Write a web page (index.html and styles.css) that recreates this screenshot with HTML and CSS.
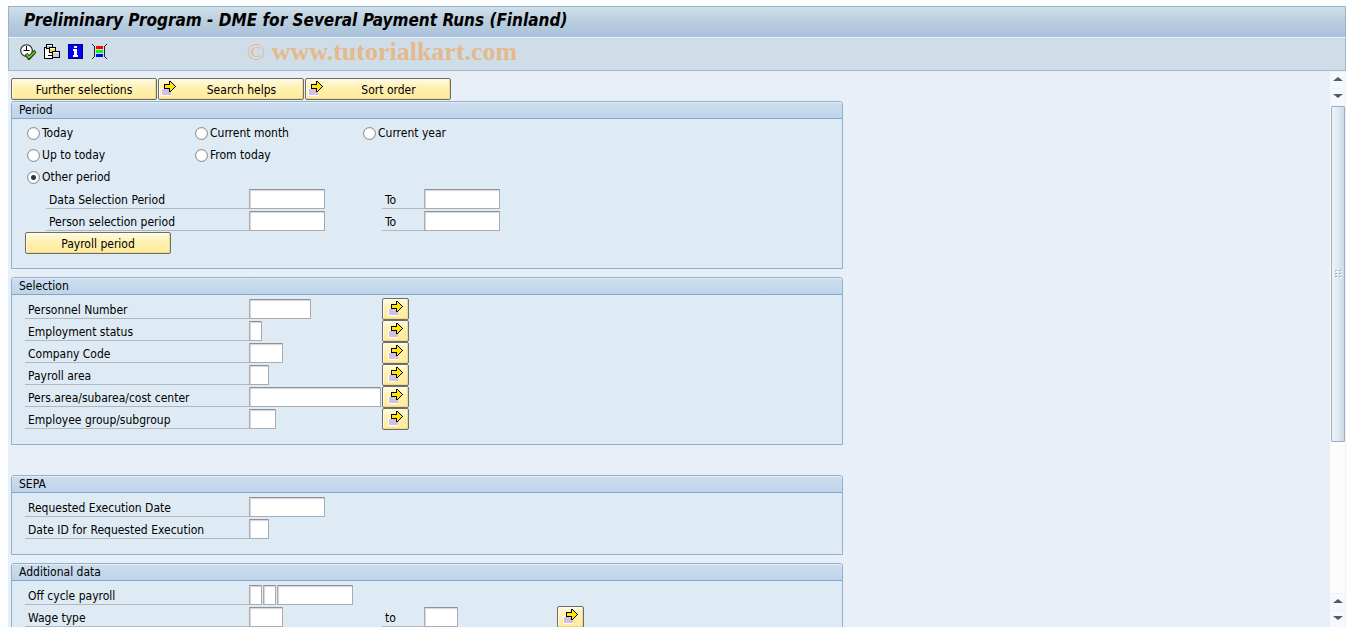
FILE: index.html
```html
<!DOCTYPE html>
<html lang="en">
<head>
	<meta charset="UTF-8">
	<meta name="viewport" content="width=device-width, initial-scale=1.0">
	<title>Preliminary Program - DME for Several Payment Runs (Finland)</title>
	<link rel="stylesheet" href="styles.css">
</head>
<body>
	<svg class="defs" aria-hidden="true">
		<symbol id="arrow" viewBox="0 0 15 15">
			<rect x="0" y="7" width="10" height="8" fill="#fff"/>
			<rect x="1" y="8" width="9" height="6" fill="#d3bfdf"/>
			<path d="M3 3h5V0h2v1h1v1h1v1h1v1h1v1h1v1h-1v1h-1v1h-1v1h-1v1h-1v1H8V8H3z" fill="#000"/>
			<path d="M4 4h5V1h1v1h1v1h1v1h1v1h1v1h-1v1h-1v1h-1v1h-1v1H9V7H4z" fill="#ffe600"/>
		</symbol>
	</svg>
	<div class="app">
		<header class="titlebar"><h1>Preliminary Program - DME for Several Payment Runs (Finland)</h1></header>
		<div class="toolbar">
			<button type="button" class="tool" aria-label="Execute">
				<svg width="16" height="16" viewBox="0 0 16 16">
					<circle cx="6.500" cy="6.500" r="5.800" fill="#fff" stroke="#222" stroke-width="1.100"/>
					<path d="M6.500 2v5M3.500 6.500h6" stroke="#000" stroke-width="1" fill="none"/>
					<path d="M6 10l3 4 6.500-7" fill="none" stroke="#143c08" stroke-width="3.600"/>
					<path d="M6.500 10.500L9 13.500l6-6" fill="none" stroke="#7acb35" stroke-width="1.600"/>
				</svg>
			</button>
			<button type="button" class="tool" aria-label="Get variant">
				<svg width="16" height="16" viewBox="0 0 16 16" shape-rendering="crispEdges">
					<path d="M0 3h9v12H0z" fill="#000"/>
					<path d="M1 4h7v10H1z" fill="#fff"/>
					<path d="M2 0h7v5H2z" fill="#000"/>
					<path d="M3 1h5v3H3z" fill="#bcc3d8"/>
					<path d="M5 3h7v6H5z" fill="#000"/>
					<path d="M6 4h5v4H6z" fill="#f5e73b"/>
					<path d="M3 6h1v6h5v-1H4V6z" fill="#000"/>
					<path d="M8 7h8v7H8z" fill="#000"/>
					<path d="M9 8h6v5H9z" fill="#c8cfdd"/>
					<path d="M9 8h6v1H9zM3 1h5v1H3zM6 4h5v1H6z" fill="#fff"/>
				</svg>
			</button>
			<button type="button" class="tool" aria-label="Information">
				<svg width="16" height="16" viewBox="0 0 16 16" shape-rendering="crispEdges">
					<path d="M0 0h15v15H0z" fill="#000080"/>
					<path d="M1 1h13v13H1z" fill="#0000f5"/>
					<path d="M6 2h3v2H6zM5 5h4v6h1v2H5v-2h1V7H5z" fill="#fff"/>
				</svg>
			</button>
			<button type="button" class="tool" aria-label="Dynamic selections">
				<svg width="16" height="16" viewBox="0 0 16 16" shape-rendering="crispEdges">
					<path d="M0 0h1v1H0zM1 1h1v1H1zM2 2h1v11H2zM1 13h1v1H1zM0 14h1v1H0zM14 0h1v1h-1zM13 1h1v1h-1zM12 2h1v11h-1zM13 13h1v1h-1zM14 14h1v1h-1z" fill="#222"/>
					<path d="M4 2h7v3H4z" fill="#f00"/>
					<path d="M4 6h7v3H4z" fill="#0f0"/>
					<path d="M4 10h7v3H4z" fill="#00f"/>
				</svg>
			</button>
			<p class="mark"><span>©</span> www.tutorialkart.com</p>
		</div>
		<div class="work">
			<main class="screen">
				<div class="actions">
					<button type="button" class="btn">Further selections</button>
					<button type="button" class="btn"><svg class="arrow"><use href="#arrow"/></svg><span>Search helps</span></button>
					<button type="button" class="btn"><svg class="arrow"><use href="#arrow"/></svg><span>Sort order</span></button>
				</div>

				<section class="panel">
					<h2>Period</h2>
					<div class="fields">
						<div class="radios">
							<label><input type="radio" name="period">Today</label>
							<label><input type="radio" name="period">Current month</label>
							<label><input type="radio" name="period">Current year</label>
						</div>
						<div class="radios">
							<label><input type="radio" name="period">Up to today</label>
							<label><input type="radio" name="period">From today</label>
						</div>
						<div class="radios">
							<label><input type="radio" name="period" checked>Other period</label>
						</div>
						<div class="row indent">
							<label for="data-from">Data Selection Period</label>
							<div><input type="text" id="data-from" class="w-date"></div>
							<label for="data-to">To</label>
							<div><input type="text" id="data-to" class="w-date"></div>
						</div>
						<div class="row indent">
							<label for="person-from">Person selection period</label>
							<div><input type="text" id="person-from" class="w-date"></div>
							<label for="person-to">To</label>
							<div><input type="text" id="person-to" class="w-date"></div>
						</div>
						<button type="button" class="btn">Payroll period</button>
					</div>
				</section>

				<section class="panel">
					<h2>Selection</h2>
					<div class="fields">
						<div class="row">
							<label for="pernr">Personnel Number</label>
							<div><input type="text" id="pernr" class="w-num"></div>
							<button type="button" class="multi" aria-label="Multiple selection"><svg class="arrow"><use href="#arrow"/></svg></button>
						</div>
						<div class="row">
							<label for="status">Employment status</label>
							<div><input type="text" id="status" class="w-1"></div>
							<button type="button" class="multi" aria-label="Multiple selection"><svg class="arrow"><use href="#arrow"/></svg></button>
						</div>
						<div class="row">
							<label for="company">Company Code</label>
							<div><input type="text" id="company" class="w-4"></div>
							<button type="button" class="multi" aria-label="Multiple selection"><svg class="arrow"><use href="#arrow"/></svg></button>
						</div>
						<div class="row">
							<label for="area">Payroll area</label>
							<div><input type="text" id="area" class="w-2"></div>
							<button type="button" class="multi" aria-label="Multiple selection"><svg class="arrow"><use href="#arrow"/></svg></button>
						</div>
						<div class="row">
							<label for="cost">Pers.area/subarea/cost center</label>
							<div><input type="text" id="cost" class="w-long"></div>
							<button type="button" class="multi" aria-label="Multiple selection"><svg class="arrow"><use href="#arrow"/></svg></button>
						</div>
						<div class="row">
							<label for="group">Employee group/subgroup</label>
							<div><input type="text" id="group" class="w-3"></div>
							<button type="button" class="multi" aria-label="Multiple selection"><svg class="arrow"><use href="#arrow"/></svg></button>
						</div>
					</div>
				</section>

				<section class="panel spaced">
					<h2>SEPA</h2>
					<div class="fields">
						<div class="row">
							<label for="exec-date">Requested Execution Date</label>
							<div><input type="text" id="exec-date" class="w-date"></div>
						</div>
						<div class="row">
							<label for="date-id">Date ID for Requested Execution</label>
							<div><input type="text" id="date-id" class="w-2"></div>
						</div>
					</div>
				</section>

				<section class="panel">
					<h2>Additional data</h2>
					<div class="fields">
						<div class="row">
							<label for="off-cycle">Off cycle payroll</label>
							<div>
								<input type="text" id="off-cycle" class="w-1">
								<input type="text" class="w-1" aria-label="Payroll identifier">
								<input type="text" class="w-date" aria-label="Off cycle date">
							</div>
						</div>
						<div class="row">
							<label for="wage-from">Wage type</label>
							<div><input type="text" id="wage-from" class="w-4"></div>
							<label for="wage-to">to</label>
							<div><input type="text" id="wage-to" class="w-4"></div>
							<button type="button" class="multi" aria-label="Multiple selection"><svg class="arrow"><use href="#arrow"/></svg></button>
						</div>
					</div>
				</section>
			</main>
			<div class="scroll">
				<button type="button" class="up" aria-label="Scroll up"></button>
				<button type="button" class="down" aria-label="Scroll down"></button>
				<div class="track">
					<div class="thumb"><i></i><i></i><i></i><i></i><i></i><i></i></div>
				</div>
				<button type="button" class="up" aria-label="Line up"></button>
				<button type="button" class="down" aria-label="Line down"></button>
			</div>
		</div>
	</div>
</body>
</html>
```
FILE: styles.css
```css
*{ box-sizing: border-box; }
body,h1,h2,p{ margin: 0; padding: 0; }
body,button,input{
	font-family: Tahoma, "DejaVu Sans Condensed", "DejaVu Sans", sans-serif;
	font-size: 12px;
	color: #000;
}
body{ background: #fcfdfe; }
button{ padding: 0; }
.defs{ display: none; }
.app{
	display: flex; flex-direction: column;
	height: 100vh;
	padding: 6px 0 3px 8px;
}

/* title and toolbar */
.titlebar{
	height: 31px;
	padding-left: 15px;
	border: 1px solid #9cb3c6; border-bottom: 0;
	background: linear-gradient(#d0e0eb, #b9cddd 50%, #a9c1dc);
}
.titlebar h1{
	font-size: 17px;
	font-style: italic;
	line-height: 27px;
	white-space: nowrap;
}
.toolbar{
	display: flex; align-items: center;
	gap: 8px;
	height: 34px;
	padding: 0 0 4px 11px;
	border: 1px solid #a3b8ca; border-top-color: #eaf2f8;
	background: #cfdde8;
}
.tool{
	width: 16px; height: 16px;
	border: 0;
	background: none;
}
.tool svg{ display: block; }
.mark{
	margin-left: 131px;
	font: bold 26px/28px "Liberation Serif", serif;
	color: #e4b98b;
	white-space: nowrap;
}
.mark span{ font-size: 24px; font-weight: normal; }

/* selection screen */
.work{
	flex: 1;
	display: flex;
	min-height: 0;
	background: #e8eff7;
}
.screen{
	flex: 1;
	min-width: 0;
	padding: 7px 3px 0;
	overflow: hidden;
}
.actions{
	display: flex;
	gap: 1px;
	margin-bottom: 1px;
}
.btn,.multi{
	display: flex; align-items: center; justify-content: center;
	height: 22px;
	border: 1px solid #6d6c69; border-radius: 2px;
	background: linear-gradient(#fffbe6, #fff1b4 40%, #feea98);
	box-shadow: inset 1px 1px #fffbe0, inset -1px -1px #f0d98a;
}
.btn{
	width: 146px;
	padding-top: 2px;
}
.multi{
	width: 27px;
	padding: 2px 0 0 5px;
	justify-content: flex-start;
}
.arrow{
	display: block;
	width: 15px; height: 15px;
	flex: none;
	align-self: flex-start;
	shape-rendering: crispEdges;
}
.btn .arrow{ margin-left: 2px; }
.btn .arrow + span{ flex: 1; padding-left: 4px; }
.panel{
	max-width: 832px;
	margin-bottom: 8px;
	border: 1px solid #8fb0ce; border-radius: 3px 3px 0 0;
	background: #deebf4;
}
.panel.spaced{ margin-top: 30px; }
.panel h2{
	height: 17px;
	padding-left: 7px;
	border-top: 1px solid #e4edf6; border-bottom: 1px solid #85a5c8;
	border-radius: 2px 2px 0 0;
	background: linear-gradient(#cdddee, #bdd4ea);
	font-size: 12px; font-weight: normal;
	line-height: 15px;
}
.fields{ padding: 3px 13px 14px; }
.radios{
	display: flex; align-items: center;
	height: 22px;
}
.radios label{
	display: flex; align-items: center;
	gap: 2px;
	width: 168px;
	line-height: 16px;
}
.radios input{
	appearance: none;
	width: 13px; height: 13px;
	margin: 0 0 0 2px;
	border: 1px solid #8b8d92; border-radius: 50%;
	background: #fff;
	box-shadow: inset 0 0 1px #aaa;
}
.radios input:checked{
	background: radial-gradient(circle, #33334a 2px, #fff 3px);
}
.row{
	display: grid;
	grid-template-columns: 224px 133px 42px 133px 27px;
	height: 22px;
}
.row.indent{
	grid-template-columns: 203px 133px 42px 133px 27px;
	padding-left: 21px;
}
.row label{
	height: 21px;
	padding: 1px 0 0 3px;
	border-bottom: 1px solid #b4b7ba;
	line-height: 22px;
	white-space: nowrap;
}
.row div{
	display: flex;
	gap: 1px;
	padding-top: 1px;
}
.row input{
	flex: none;
	height: 20px;
	padding: 0 2px;
	border: 1px solid #a9abb0; border-top-color: #8f9196; border-radius: 1px;
	background: #fff;
	box-shadow: inset 1px 1px 1px #d5d5dc;
}
.row .w-1{ width: 13px; }
.row .w-2{ width: 20px; }
.row .w-3{ width: 27px; }
.row .w-4{ width: 34px; }
.row .w-num{ width: 62px; }
.row .w-date{ width: 76px; }
.row .w-long{ width: 132px; }

/* scroll bar */
.scroll{
	display: flex; flex-direction: column;
	gap: 1px;
	width: 16px;
	padding: 1px 1px 0 0;
	background: #eef2f6;
}
.scroll button{
	display: flex; align-items: center; justify-content: center;
	height: 16px;
	padding-bottom: 2px;
	border: 0;
	background: #f5f8fc;
}
.scroll button::before{
	content: "";
	border: 5px solid transparent;
}
.scroll .up::before{ border-top: 0; border-bottom: 4px solid #4d5d6b; }
.scroll .down::before{ border-bottom: 0; border-top: 4px solid #4d5d6b; }
.track{
	flex: 1;
	padding-left: 1px;
	background: #fcfcfd;
}
.thumb{
	display: grid;
	grid-template-columns: 3px 3px;
	gap: 1px;
	align-content: center; justify-content: center;
	height: 69%;
	border: 1px solid #9aafc1; border-radius: 1px;
	background: linear-gradient(to right, #edf4fa, #dfeaf3 50%, #c9dae7);
}
.thumb i{
	height: 2px;
	border: 1px solid #9fb0be; border-right-color: #fff; border-bottom-color: #fff;
}
```
